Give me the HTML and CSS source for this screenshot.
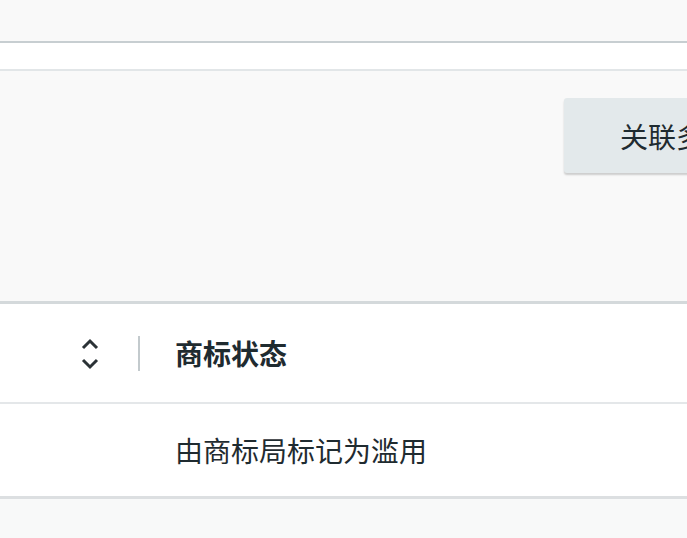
FILE: index.html
```html
<!DOCTYPE html>
<html lang="zh-CN">

<head>
    <meta charset="UTF-8">
    <meta name="viewport" content="width=device-width, initial-scale=1.0">
    <title>商标</title>
    <link rel="stylesheet" href="styles.css">
</head>

<body>
    <div id="top-bar"></div>
    <div id="tab-strip"></div>
    <div id="action-panel">
        <button class="action-btn">关联多个商标</button>
    </div>
    <div id="table">
        <div class="table-row head-row">
            <div class="sort-cell">
                <svg class="sort-icon" width="20" height="34" viewBox="0 0 20 34">
                    <path d="M3 12 L10 5 L17 12" fill="none" stroke="#2b3236" stroke-width="3" />
                    <path d="M3 24 L10 31 L17 24" fill="none" stroke="#2b3236" stroke-width="3" />
                </svg>
                <span class="col-divider"></span>
            </div>
            <div class="status-cell">商标状态</div>
        </div>
        <div class="table-row body-row">
            <div class="sort-cell"></div>
            <div class="status-cell">由商标局标记为滥用</div>
        </div>
    </div>
    <div id="footer"></div>
</body>

</html>
```

FILE: styles.css
```css
body {
    margin: 0;
    background-color: #f9f9f9;
    font-family: "Noto Sans CJK SC", "Noto Sans", sans-serif;
    color: #1f2b30;
    overflow: hidden;
}

#top-bar {
    height: 41px;
    background-color: #f9f9f9;
}

#tab-strip {
    height: 26px;
    background-color: #fff;
    border-top: 2px solid #c7ced1;
    border-bottom: 2px solid #e2e6e8;
}

#action-panel {
    height: 203px;
    padding-top: 27px;
    padding-left: 564px;
    display: flex;
    white-space: nowrap;
    background-color: #f9f9f9;
}

.action-btn {
    height: 75px;
    padding: 0 40px 0 56px;
    border: none;
    border-radius: 3px;
    background-color: #e3e9eb;
    box-shadow: 0 2px 2px rgba(0, 0, 0, 0.18);
    font-family: inherit;
    font-size: 28px;
    color: #1f2b30;
    flex-shrink: 0;
}

#table {
    background-color: #fff;
    border-top: 3px solid #d4d9db;
}

.table-row {
    display: flex;
    align-items: center;
}

.head-row {
    height: 98px;
    border-bottom: 2px solid #e4e7e9;
}

.body-row {
    height: 92px;
    border-bottom: 3px solid #dcdfe1;
}

.sort-cell {
    width: 140px;
    display: flex;
    align-items: center;
    justify-content: flex-end;
    gap: 38px;
}

.sort-icon {
    display: block;
}

.col-divider {
    width: 2px;
    height: 35px;
    background-color: #c3cacd;
}

.status-cell {
    padding-left: 35px;
    font-size: 28px;
    white-space: nowrap;
}

.head-row .status-cell {
    font-weight: bold;
}

#footer {
    height: 60px;
    background-color: #f8f9f9;
}
```
